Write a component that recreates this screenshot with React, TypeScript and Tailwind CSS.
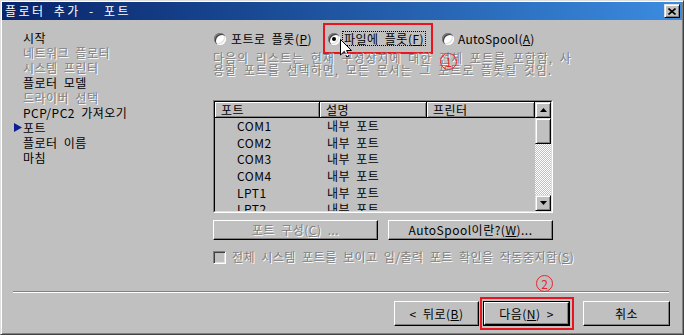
import React from "react";

// etched look for disabled captions
const etched = "text-[#808080] [text-shadow:1px_1px_0_#ffffff]";
const raised =
  "border border-t-white border-l-white border-r-black border-b-black shadow-[inset_-1px_-1px_0_#808080]";
const raisedSmall =
  "border border-t-[#dfdfdf] border-l-[#dfdfdf] border-r-black border-b-black shadow-[inset_1px_1px_0_#ffffff,inset_-1px_-1px_0_#808080]";

const steps = [
  { label: "시작" },
  { label: "네트워크 플로터", disabled: true },
  { label: "시스템 프린터", disabled: true },
  { label: "플로터 모델" },
  { label: "드라이버 선택", disabled: true },
  { label: "PCP/PC2 가져오기" },
  { label: "포트", current: true },
  { label: "플로터 이름" },
  { label: "마침" },
];

const ports = ["COM1", "COM2", "COM3", "COM4", "LPT1", "LPT2"];

const Mn = ({ children }: { children: React.ReactNode }) => (
  <span className="underline underline-offset-[1px]">{children}</span>
);

const Radio = ({ checked }: { checked?: boolean }) => (
  <span className="w-[12px] h-[12px] shrink-0 rounded-full bg-white flex items-center justify-center shadow-[inset_1px_1px_0_#808080,inset_2px_2px_0_#404040,inset_-1px_-1px_0_#ffffff,inset_-2px_-2px_0_#dfdfdf]">
    {checked && <span className="w-[4px] h-[4px] rounded-full bg-black" />}
  </span>
);

const Circled = ({ n, className }: { n: string; className: string }) => (
  <span
    className={`absolute w-[17px] h-[17px] rounded-full border border-[#e0282e] text-[#e0282e] text-[12px] tracking-normal leading-none flex items-center justify-center [text-shadow:none] ${className}`}
  >
    {n}
  </span>
);

const ScrollBtn = ({ up }: { up?: boolean }) => (
  <div className={`h-[16px] shrink-0 bg-[#c0c0c0] flex items-center justify-center ${raisedSmall}`}>
    <svg width="7" height="4" viewBox="0 0 7 4">
      <polygon points={up ? "0,4 3.5,0 7,4" : "0,0 3.5,4 7,0"} fill="#000" />
    </svg>
  </div>
);

export default function App() {
  return (
    <div className="w-[684px] h-[335px] bg-[#c0c0c0] font-['Noto_Sans_CJK_KR',sans-serif] text-[12px] tracking-[0.5px] [word-spacing:3px] text-black">
      <div className="w-full h-full flex flex-col p-[1px] border border-t-[#dfdfdf] border-l-[#dfdfdf] border-r-[#404040] border-b-[#404040] shadow-[inset_1px_1px_0_#ffffff,inset_-1px_-1px_0_#808080]">
        {/* Title bar */}
        <div className="h-[18px] shrink-0 flex items-center justify-between pl-[3px] pr-[2px] bg-linear-to-r from-[#0a246a] to-[#3c8ce0]">
          <span className="text-white leading-[18px] tracking-[2.5px] whitespace-nowrap">플로터 추가 - 포트</span>
          <div className={`w-[16px] h-[14px] bg-[#c0c0c0] flex items-center justify-center ${raisedSmall}`}>
            <svg width="8" height="7" viewBox="0 0 8 7">
              <path d="M0.5 0.5 L7.5 6.5 M7.5 0.5 L0.5 6.5" stroke="#000" strokeWidth="1.6" />
            </svg>
          </div>
        </div>

        {/* Wizard body */}
        <div className="flex h-[271px] shrink-0">
          {/* Steps */}
          <div className="w-[211px] shrink-0 pl-[12px] pt-[10px] flex flex-col">
            {steps.map((s) => (
              <div key={s.label} className="flex items-center h-[15px] leading-[15px] whitespace-nowrap">
                <span className="w-[9px] shrink-0 flex items-center">
                  {s.current && (
                    <svg width="8" height="9" viewBox="0 0 8 9">
                      <polygon points="0,0 8,4.5 0,9" fill="#0a1e96" />
                    </svg>
                  )}
                </span>
                <span className={s.disabled ? etched : ""}>{s.label}</span>
              </div>
            ))}
          </div>

          {/* Port page */}
          <div className="w-[340px] shrink-0 pt-[11px] flex flex-col">
            <div className="h-[15px] flex items-center whitespace-nowrap">
              <div className="w-[115px] shrink-0 pl-[1px] flex items-center gap-[5px]">
                <Radio />
                <span>
                  포트로 플롯(<Mn>P</Mn>)
                </span>
              </div>
              <div className="relative w-[114px] shrink-0 flex items-center gap-[2px]">
                <Radio checked />
                <span className="border border-dotted border-black px-[1px] leading-[13px]">
                  파일에 플롯(<Mn>F</Mn>)
                </span>
                <span className="absolute -left-[5px] -top-[8px] w-[110px] h-[31px] border-2 border-[#e8141e]" />
                <svg className="absolute left-[12px] top-[8px]" width="12" height="19" viewBox="0 0 12 19">
                  <path
                    d="M0.5 0.5 L0.5 16 L4.3 12.3 L6.8 18 L9 17 L6.6 11.5 L11.5 11.5 Z"
                    fill="#fff"
                    stroke="#000"
                    strokeWidth="1"
                  />
                </svg>
              </div>
              <div className="shrink-0 flex items-center gap-[4px] tracking-[0.2px]">
                <Radio />
                <span>
                  AutoSpool(<Mn>A</Mn>)
                </span>
              </div>
            </div>

            <div className={`relative mt-[6px] leading-[12px] tracking-[1px] whitespace-nowrap ${etched}`}>
              <div>다음의 리스트는 현재 구성장치에 대한 전체 포트를 포함함, 사</div>
              <div>용할 포트를 선택하면, 모든 문서는 그 포트로 플롯될 것임.</div>
              <Circled n="1" className="left-[227px] top-[1px]" />
            </div>

            {/* Port list */}
            <div className="mt-[24px] h-[113px] border border-t-[#808080] border-l-[#808080] border-r-white border-b-white">
              <div className="h-full flex border border-t-black border-l-black border-r-[#dfdfdf] border-b-[#dfdfdf]">
                <div className="flex-1 overflow-hidden flex flex-col">
                  <div className="h-[16px] shrink-0 flex leading-[15px]">
                    {[
                      ["포트", "w-[105px]"],
                      ["설명", "w-[107px]"],
                      ["프린터", "w-[108px]"],
                    ].map(([t, w]) => (
                      <div
                        key={t}
                        className={`${w} shrink-0 pl-[6px] border-r border-b border-r-black border-b-black shadow-[inset_1px_1px_0_#ffffff,inset_-1px_-1px_0_#808080]`}
                      >
                        {t}
                      </div>
                    ))}
                  </div>
                  {ports.map((p) => (
                    <div key={p} className="h-[16.6px] shrink-0 flex items-center leading-[16px] whitespace-nowrap">
                      <div className="w-[105px] shrink-0 pl-[22px]">{p}</div>
                      <div className="w-[107px] shrink-0 pl-[7px]">내부 포트</div>
                    </div>
                  ))}
                </div>
                <div className="w-[16px] shrink-0 flex flex-col">
                  <ScrollBtn up />
                  <div className={`h-[26px] shrink-0 bg-[#c0c0c0] ${raisedSmall}`} />
                  <div className="flex-1 bg-[repeating-conic-gradient(#ffffff_0%_25%,#c0c0c0_0%_50%)] bg-[length:2px_2px]" />
                  <ScrollBtn />
                </div>
              </div>
            </div>

            <div className="mt-[7px] h-[20px] flex gap-[10px] whitespace-nowrap">
              <div className={`w-[165px] bg-[#c0c0c0] flex items-center justify-center ${raised} ${etched}`}>
                포트 구성(<Mn>C</Mn>) ...
              </div>
              <div className={`w-[165px] bg-[#c0c0c0] flex items-center justify-center ${raised}`}>
                AutoSpool이란?(<Mn>W</Mn>)...
              </div>
            </div>

            <div className="mt-[10px] h-[14px] flex items-center gap-[6px] whitespace-nowrap">
              <span className="w-[13px] h-[13px] shrink-0 bg-[#c0c0c0] border border-t-[#808080] border-l-[#808080] border-r-white border-b-white shadow-[inset_1px_1px_0_#404040,inset_-1px_-1px_0_#dfdfdf]" />
              <span className={etched}>
                전체 시스템 포트를 보이고 입/출력 포트 확인을 작동중지함(<Mn>S</Mn>)
              </span>
            </div>
          </div>
        </div>

        {/* Separator */}
        <div className="ml-[11px] mr-[13px] h-[2px] shrink-0 border-t border-t-[#808080] border-b border-b-white" />

        {/* Navigation buttons */}
        <div className="mt-[8px] flex justify-end pr-[12px] whitespace-nowrap">
          <div className={`w-[85px] h-[25px] bg-[#c0c0c0] flex items-center justify-center ${raised}`}>
            &lt; 뒤로(<Mn>B</Mn>)
          </div>
          <div className="relative ml-[4px] w-[87px] h-[25px] border border-black">
            <div className={`h-full bg-[#c0c0c0] flex items-center justify-center ${raised}`}>
              다음(<Mn>N</Mn>) &gt;
            </div>
            <span className="absolute -left-[4px] -top-[5px] w-[94px] h-[33px] border-2 border-[#e8141e]" />
            <Circled n="2" className="left-[52px] -top-[27px]" />
          </div>
          <div className={`ml-[13px] w-[87px] h-[25px] bg-[#c0c0c0] flex items-center justify-center ${raised}`}>
            취소
          </div>
        </div>
      </div>
    </div>
  );
}
